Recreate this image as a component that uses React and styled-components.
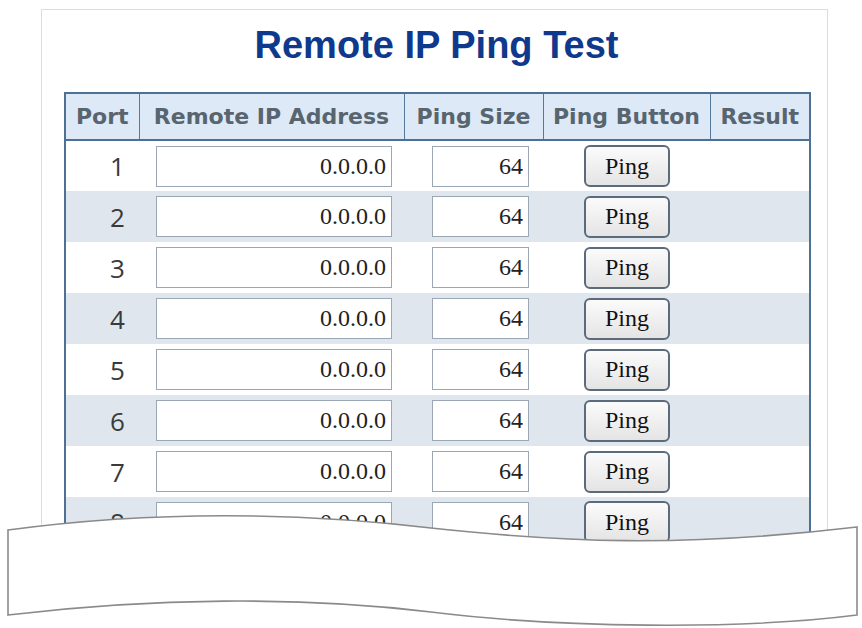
import React from "react";
import styled, { createGlobalStyle } from "styled-components";

const rows = [1, 2, 3, 4, 5, 6, 7, 8];

const App = () => {
  return (
    <Page__div>
      <GlobalStyle />
      <Frame__section>
        <Title__h1>Remote IP Ping Test</Title__h1>

        <PingTable__table>
          <colgroup>
            <col style={{ width: 74 }} />
            <col style={{ width: 265 }} />
            <col style={{ width: 139 }} />
            <col style={{ width: 167 }} />
            <col style={{ width: 100 }} />
          </colgroup>
          <thead>
            <tr>
              <HeadCell__th>Port</HeadCell__th>
              <HeadCell__th>Remote IP Address</HeadCell__th>
              <HeadCell__th>Ping Size</HeadCell__th>
              <HeadCell__th>Ping Button</HeadCell__th>
              <HeadCell__th>Result</HeadCell__th>
            </tr>
          </thead>
          <tbody>
            {rows.map((port) => (
              <Row__tr key={port} $shaded={port % 2 === 0}>
                <PortCell__td>{port}</PortCell__td>
                <Cell__td $pad="0 0 0 17px">
                  <Field__input $width={236} defaultValue="0.0.0.0" readOnly />
                </Cell__td>
                <Cell__td $pad="0 0 0 28px">
                  <Field__input $width={97} defaultValue="64" readOnly />
                </Cell__td>
                <Cell__td $pad="0 0 0 41px">
                  <PingButton__button type="button">Ping</PingButton__button>
                </Cell__td>
                <Cell__td />
              </Row__tr>
            ))}
          </tbody>
        </PingTable__table>
      </Frame__section>

      <TornEdge__svg viewBox="0 500 862 128" aria-hidden="true">
        <path
          d="M8 530 C 120 515, 260 508, 431 528 C 560 542, 680 548, 857 527 L 857 615 C 740 630, 560 628, 431 612 C 300 596, 150 598, 8 615 Z"
          fill="#ffffff"
          stroke="#8a8a8a"
          strokeWidth="1.6"
          strokeLinejoin="miter"
        />
      </TornEdge__svg>
    </Page__div>
  );
};

export default App;

const GlobalStyle = createGlobalStyle`
  html, body {
    margin: 0;
    padding: 0;
    background: #ffffff;
    overflow: hidden;
  }
`;

const Page__div = styled.div`
  position: relative;
  width: 862px;
  height: 628px;
  overflow: hidden;
  padding: 9px 0 0 41px;
  box-sizing: border-box;
`;

const Frame__section = styled.section`
  width: 787px;
  box-sizing: border-box;
  border: 1px solid #dcdcdc;
  border-bottom: none;
  padding: 13px 0 40px 22px;
`;

const Title__h1 = styled.h1`
  margin: 0 0 25px;
  padding-right: 18px;
  text-align: center;
  font-family: "Liberation Sans", Arial, sans-serif;
  font-weight: 700;
  font-size: 38px;
  line-height: 44px;
  color: #0f398c;
`;

const PingTable__table = styled.table`
  width: 745px;
  table-layout: fixed;
  border-collapse: collapse;
  border: 2px solid #4d7093;
`;

const HeadCell__th = styled.th`
  height: 45px;
  padding: 0;
  background: #dde9f7;
  border: 1.5px solid #56789a;
  border-bottom: 2px solid #4d7093;
  text-align: center;
  font-family: "DejaVu Sans", Verdana, sans-serif;
  font-weight: 700;
  font-size: 22px;
  color: #58656f;
  white-space: nowrap;
`;

const Row__tr = styled.tr`
  height: 51px;
  background: ${(p) => (p.$shaded ? "#dfe6ee" : "#ffffff")};
`;

const Cell__td = styled.td`
  padding: ${(p) => p.$pad || "0"};
  vertical-align: middle;
`;

const PortCell__td = styled.td`
  padding: 0 0 0 30px;
  text-align: center;
  vertical-align: middle;
  font-family: "Open Sans", "DejaVu Sans", sans-serif;
  font-size: 26px;
  color: #3a3a3a;
`;

const Field__input = styled.input`
  display: block;
  width: ${(p) => p.$width}px;
  height: 41px;
  box-sizing: border-box;
  margin: 0;
  padding: 0 5px 0 0;
  border: 1.5px solid #9ba7b4;
  border-radius: 0;
  background: #ffffff;
  text-align: right;
  font-family: "Liberation Serif", "Times New Roman", serif;
  font-size: 24px;
  color: #222222;
  outline: none;
`;

const PingButton__button = styled.button`
  display: block;
  width: 86px;
  height: 42px;
  margin: 0;
  padding: 0;
  border: 2px solid #5c6b7c;
  border-radius: 6px;
  background: linear-gradient(#fbfbfb, #e4e4e4);
  font-family: "Liberation Serif", "Times New Roman", serif;
  font-size: 24px;
  color: #111111;
  cursor: pointer;
`;

const TornEdge__svg = styled.svg`
  position: absolute;
  left: 0;
  top: 500px;
  width: 862px;
  height: 128px;
`;
